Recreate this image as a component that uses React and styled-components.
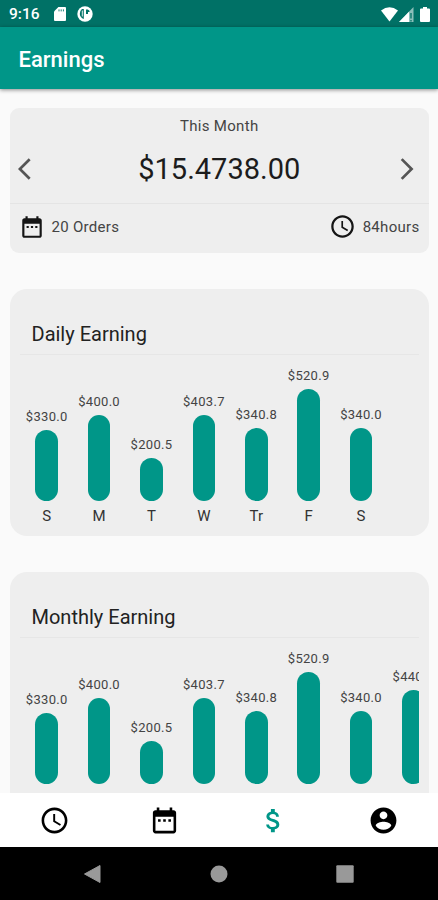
import React from "react";
import styled, {createGlobalStyle} from "styled-components";

const TEAL = "#009688";
const PX_PER_DOLLAR = 0.2143;

const daily = [
  {label: "S", value: 330.0},
  {label: "M", value: 400.0},
  {label: "T", value: 200.5},
  {label: "W", value: 403.7},
  {label: "Tr", value: 340.8},
  {label: "F", value: 520.9},
  {label: "S", value: 340.0},
];

const monthly = [
  {label: "Jan", value: 330.0},
  {label: "Feb", value: 400.0},
  {label: "Mar", value: 200.5},
  {label: "Apr", value: 403.7},
  {label: "May", value: 340.8},
  {label: "Jun", value: 520.9},
  {label: "Jul", value: 340.0},
  {label: "Aug", value: 440.0},
];

const paths = {
  back: "M11.67 3.87L9.9 2.1 0 12l9.9 9.9 1.77-1.77L3.54 12z",
  forward: "M6.23 20.23L8 22l10-10L8 2 6.23 3.77 14.46 12z",
  calendar: "M9 11H7v2h2v-2zm4 0h-2v2h2v-2zm4 0h-2v2h2v-2zm2-7h-1V2h-2v2H8V2H6v2H5c-1.11 0-1.99.9-1.99 2L3 20c0 1.1.89 2 2 2h14c1.1 0 2-.9 2-2V6c0-1.1-.9-2-2-2zm0 16H5V9h14v11z",
  clock: "M11.99 2C6.47 2 2 6.48 2 12s4.47 10 9.99 10C17.52 22 22 17.52 22 12S17.52 2 11.99 2zM12 20c-4.42 0-8-3.58-8-8s3.58-8 8-8 8 3.58 8 8-3.58 8-8 8zm.5-13H11v6l5.25 3.15.75-1.23-4.5-2.67z",
  dollar: "M11.8 10.9c-2.27-.59-3-1.2-3-2.15 0-1.09 1.01-1.85 2.7-1.85 1.78 0 2.44.85 2.5 2.1h2.21c-.07-1.72-1.12-3.3-3.21-3.81V3h-3v2.16c-1.94.42-3.5 1.68-3.5 3.61 0 2.31 1.91 3.46 4.7 4.13 2.5.6 3 1.48 3 2.41 0 .69-.49 1.79-2.7 1.79-2.06 0-2.87-.92-2.98-2.1h-2.2c.12 2.19 1.76 3.42 3.68 3.83V21h3v-2.15c1.95-.37 3.5-1.5 3.5-3.55 0-2.84-2.43-3.81-4.7-4.4z",
  account: "M12 2C6.48 2 2 6.48 2 12s4.48 10 10 10 10-4.48 10-10S17.52 2 12 2zm0 3c1.66 0 3 1.34 3 3s-1.34 3-3 3-3-1.34-3-3 1.34-3 3-3zm0 14.2c-2.5 0-4.71-1.28-6-3.22.03-1.99 4-3.08 6-3.08 1.99 0 5.97 1.09 6 3.08-1.29 1.94-3.5 3.22-6 3.22z",
};

const Icon = ({name, size, color}) => (
  <Svg width={size} height={size} viewBox="0 0 24 24" fill={color || "#151515"}>
    <path d={paths[name]}/>
  </Svg>
);

const Chart = ({title, data}) => (
  <ChartCard>
    <ChartTitle>{title}</ChartTitle>
    <Bars>
      {data.map((item, i) => (
        <Column key={i}>
          <Amount>${item.value.toFixed(1)}</Amount>
          <Bar style={{height: item.value * PX_PER_DOLLAR}}/>
          <Label>{item.label}</Label>
        </Column>
      ))}
    </Bars>
  </ChartCard>
);

const App = () => {
  return (
    <Screen>
      <GlobalStyle/>
      <StatusBar>
        <Time>9:16</Time>
        <Svg width="12" height="16" viewBox="0 0 12 16">
          <path d="M4.4 1H11q1 0 1 1v12q0 1-1 1H1q-1 0-1-1V5.400z" fill="#fff"/>
          <path d="M5 3.400v2M7.200 3.400v2M9.400 3.400v2" stroke="#007166" strokeWidth=".9"/>
        </Svg>
        <Disc width="16" height="16" viewBox="0 0 16 16">
          <circle cx="8" cy="8" r="7.700" fill="#fff"/>
          <path d="M6.800 3H4.900Q2.600 5 2.800 8q.3 3.500 4 5zM9 3.400h1.700q2 .6 2 2.700H11v2H9z" fill="#007166"/>
          <path d="M5.300 4.500v6" stroke="#fff" strokeWidth=".9"/>
        </Disc>
        <Signals>
          <Svg width="17" height="15" viewBox="0 0 17 15">
            <path d="M0 3.500Q8.500-3 17 3.500L8.500 14.500z" fill="#fff"/>
          </Svg>
          <Svg width="15" height="15" viewBox="0 0 15 15">
            <path d="M14.500 0v15H0z" fill="#fff" fillOpacity=".55"/>
            <path d="M10 4.700V15H0z" fill="#fff"/>
            <path d="M12 6v5.500M12 13v1.500" stroke="#007166" strokeWidth="1.300"/>
          </Svg>
          <Battery width="10" height="15" viewBox="0 0 10 15">
            <path d="M3 0h4v1.500h2q1 0 1 1V14q0 1-1 1H1q-1 0-1-1V2.500q0-1 1-1h2z" fill="#fff"/>
          </Battery>
        </Signals>
      </StatusBar>
      <AppBar>Earnings</AppBar>
      <Content>
        <Summary>
          <Period>This Month</Period>
          <TotalRow>
            <Icon name="back" size={26} color="#555"/>
            <Total>$15.4738.00</Total>
            <Icon name="forward" size={26} color="#555"/>
          </TotalRow>
          <Stats>
            <Stat><Icon name="calendar" size={26}/>20 Orders</Stat>
            <Stat><Icon name="clock" size={27}/>84hours</Stat>
          </Stats>
        </Summary>
        <Chart title="Daily Earning" data={daily}/>
        <Chart title="Monthly Earning" data={monthly}/>
      </Content>
      <TabBar>
        <Tab><Icon name="clock" size={31} color="#000"/></Tab>
        <Tab><Icon name="calendar" size={31} color="#000"/></Tab>
        <Tab><Icon name="dollar" size={31} color={TEAL}/></Tab>
        <Tab><Icon name="account" size={31} color="#000"/></Tab>
      </TabBar>
      <SystemBar>
        <Svg width="18" height="20" viewBox="0 0 18 20">
          <path d="M16 1.500v17L.5 10z" fill="#999" stroke="#999" strokeLinejoin="round"/>
        </Svg>
        <Svg width="18" height="18" viewBox="0 0 18 18">
          <circle cx="9" cy="9" r="8.500" fill="#999"/>
        </Svg>
        <Svg width="18" height="18" viewBox="0 0 18 18">
          <rect x=".3" y=".3" width="17.400" height="17.400" rx="1" fill="#999"/>
        </Svg>
      </SystemBar>
    </Screen>
  )
};

const GlobalStyle = createGlobalStyle`
  body {
    margin: 0;
    font-family: Roboto, "Liberation Sans", sans-serif;
    background: #fafafa;
  }
  * {
    box-sizing: border-box;
  }
`;
const Svg = styled.svg`
  display: block;
  flex: none;
`;
const Screen = styled.div`
  display: flex;
  flex-direction: column;
  width: 438px;
  height: 900px;
  overflow: hidden;
`;
const StatusBar = styled.div`
  display: flex;
  align-items: center;
  flex: none;
  height: 27px;
  padding: 1px 8px 0 9px;
  background: #007166;
  color: #fff;
`;
const Time = styled.span`
  width: 45px;
  font-size: 15.5px;
  font-weight: 500;
`;
const Disc = styled(Svg)`
  margin-left: 11px;
`;
const Signals = styled.div`
  display: flex;
  margin-left: auto;
  gap: 1px;
`;
const Battery = styled(Svg)`
  margin-left: 5px;
`;
const AppBar = styled.div`
  display: flex;
  align-items: center;
  flex: none;
  height: 62px;
  padding: 3px 18.5px 0;
  background: ${TEAL};
  color: #fff;
  font-size: 22px;
  font-weight: 500;
  z-index: 1;
  box-shadow: 0 1px 4px rgba(0, 0, 0, 0.45);
`;
const Content = styled.div`
  flex: 1;
  min-height: 0;
  overflow: hidden;
  padding: 19px 9px 0 9.5px;
`;
const Summary = styled.div`
  height: 144.5px;
  border-radius: 9px;
  background: #eee;
  color: #444;
`;
const Period = styled.div`
  padding-top: 9px;
  font-size: 15px;
  line-height: 18px;
  letter-spacing: 0.3px;
  text-align: center;
`;
const TotalRow = styled.div`
  display: flex;
  align-items: center;
  justify-content: space-between;
  height: 69px;
  padding: 0 8.5px;
  border-bottom: 1px solid #e4e4e4;
`;
const Total = styled.div`
  font-size: 29px;
  color: #1c1c1c;
`;
const Stats = styled.div`
  display: flex;
  justify-content: space-between;
  padding: 0 9.5px 0 9px;
  height: 45px;
`;
const Stat = styled.div`
  display: flex;
  align-items: center;
  gap: 7px;
  font-size: 15px;
  letter-spacing: 0.3px;
`;
const ChartCard = styled.div`
  height: 247px;
  margin-top: 36px;
  padding: 0 10px;
  border-radius: 17px;
  background: #eee;
`;
const ChartTitle = styled.div`
  height: 66px;
  padding: 32px 12px 0;
  border-bottom: 1px solid #e6e6e6;
  font-size: 20px;
  line-height: 26px;
  color: #222;
`;
const Bars = styled.div`
  display: flex;
  align-items: flex-end;
  height: 170.500px;
  padding-left: 1px;
  overflow: hidden;
`;
const Column = styled.div`
  display: flex;
  flex-direction: column;
  align-items: center;
  flex: none;
  width: 52.4px;
`;
const Amount = styled.div`
  margin-bottom: 5px;
  font-size: 13px;
  line-height: 16px;
  letter-spacing: 0.3px;
  color: #444;
`;
const Bar = styled.div`
  width: 22.5px;
  border-radius: 12px;
  background: ${TEAL};
`;
const Label = styled.div`
  height: 24px;
  padding-top: 6px;
  font-size: 15px;
  line-height: 18px;
  color: #333;
`;
const TabBar = styled.div`
  display: flex;
  flex: none;
  height: 54px;
  background: #fff;
`;
const Tab = styled.div`
  display: flex;
  flex: 1;
  align-items: center;
  justify-content: center;
`;
const SystemBar = styled.div`
  display: flex;
  align-items: center;
  justify-content: center;
  flex: none;
  gap: 108px;
  height: 53px;
  background: #000;
`;

export default App;
